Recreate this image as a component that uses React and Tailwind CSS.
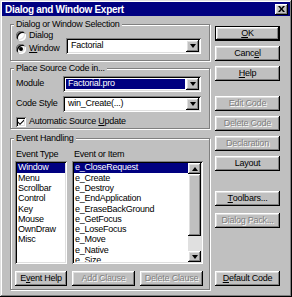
import React from "react";

// win95 style bevels
const raised =
  "shadow-[inset_-1px_-1px_0_#000,inset_1px_1px_0_#fff,inset_-2px_-2px_0_#808080,inset_2px_2px_0_#dfdfdf]";
const sunken =
  "shadow-[inset_1px_1px_0_#808080,inset_-1px_-1px_0_#fff,inset_2px_2px_0_#000,inset_-2px_-2px_0_#dfdfdf]";
const groupBox =
  "m-0 min-w-0 border border-[#808080] p-0 shadow-[inset_1px_1px_0_#fff,1px_1px_0_#fff]";

const U = ({ children }) => (
  <span className="underline underline-offset-[1px]">{children}</span>
);

const Button = ({ children, disabled, isDefault, className = "" }) => (
  <div
    className={`h-[15px] bg-[#c0c0c0] ${isDefault ? "border border-black" : ""} ${className}`}
  >
    <div
      className={`flex h-full w-full items-center justify-center whitespace-nowrap leading-none ${raised} ${
        disabled ? "text-[#808080] [text-shadow:1px_1px_0_#fff]" : "text-black"
      }`}
    >
      {children}
    </div>
  </div>
);

const Arrow = ({ up }) => (
  <div
    className={`h-0 w-0 border-x-[3px] border-x-transparent ${
      up ? "border-b-[4px] border-b-black" : "border-t-[4px] border-t-black"
    }`}
  />
);

const ArrowBtn = ({ up, className = "" }) => (
  <div className={`flex items-center justify-center bg-[#c0c0c0] ${raised} ${className}`}>
    <Arrow up={up} />
  </div>
);

const Combo = ({ value, selected, className = "" }) => (
  <div className={`flex h-[16px] items-stretch bg-white p-[2px] ${sunken} ${className}`}>
    <div className="flex flex-1 items-center py-[1px] pl-[1px]">
      <span
        className={`flex h-full w-full items-center px-[2px] ${
          selected ? "bg-[#000080] text-white" : "text-black"
        }`}
      >
        {value}
      </span>
    </div>
    <ArrowBtn className="ml-[1px] w-[13px]" />
  </div>
);

const Radio = ({ label, checked, className = "" }) => (
  <div className={`flex items-center ${className}`}>
    <div
      className={`flex h-[10px] w-[10px] items-center justify-center rounded-full bg-white ${sunken}`}
    >
      {checked && <div className="h-[4px] w-[4px] rounded-full bg-black" />}
    </div>
    <span className="ml-[3px]">{label}</span>
  </div>
);

const eventTypes = ["Window", "Menu", "Scrollbar", "Control", "Key", "Mouse", "OwnDraw", "Misc"];
const events = [
  "e_CloseRequest",
  "e_Create",
  "e_Destroy",
  "e_EndApplication",
  "e_EraseBackGround",
  "e_GetFocus",
  "e_LoseFocus",
  "e_Move",
  "e_Native",
  "e_Size",
];

export default function App() {
  return (
    <div className="w-[292px] h-[297px] overflow-hidden bg-[#c0c0c0] p-[2px] font-['Liberation_Sans',Arial,sans-serif] text-[9px] tracking-[-0.25px] text-black shadow-[inset_-1px_-1px_0_#000,inset_1px_1px_0_#dfdfdf,inset_-2px_-2px_0_#808080,inset_2px_2px_0_#fff]">
      {/* title bar */}
      <div className="flex h-[14px] items-center bg-[#000080] pl-[3px] pr-[2px]">
        <span className="text-[10px] font-bold tracking-[-0.3px] text-white">
          Dialog and Window Expert
        </span>
        <div className={`ml-auto flex h-[11px] w-[13px] items-center justify-center bg-[#c0c0c0] ${raised}`}>
          <svg width="7" height="6" viewBox="0 0 7 6">
            <path d="M0 0h2l1.5 2L5 0h2L4.5 3 7 6H5L3.5 4 2 6H0l2.5-3z" fill="#000" />
          </svg>
        </div>
      </div>

      <div className="flex pl-[8px]">
        {/* left column */}
        <div className="flex w-[200px] flex-col">
          <fieldset className={`mt-[3px] ${groupBox}`}>
            <legend className="ml-[3px] bg-[#c0c0c0] px-[2px] leading-[11px]">
              Dialog or Window Selection
            </legend>
            <div className="flex items-end pb-[5px] pl-[5px] pr-[8px]">
              <div className="flex flex-col">
                <Radio label="Dialog" className="h-[11px]" />
                <Radio
                  label={
                    <>
                      <U>W</U>indow
                    </>
                  }
                  checked
                  className="mt-[2px] h-[12px]"
                />
              </div>
              <Combo value="Factorial" className="mb-[1px] ml-auto w-[135px]" />
            </div>
          </fieldset>

          <fieldset className={`mt-[2px] ${groupBox}`}>
            <legend className="ml-[3px] bg-[#c0c0c0] px-[2px] leading-[11px]">
              Place Source Code in...
            </legend>
            <div className="flex flex-col pb-[1px] pl-[5px] pr-[8px] pt-[2px]">
              <div className="flex items-center">
                <span>Module</span>
                <Combo value="Factorial.pro" selected className="ml-auto w-[138px]" />
              </div>
              <div className="mt-[4px] flex items-center">
                <span>Code Style</span>
                <Combo value="win_Create(...)" className="ml-auto w-[138px]" />
              </div>
              <div className="mt-[5px] flex h-[10px] items-center">
                <div className={`flex h-[10px] w-[10px] items-center justify-center bg-white ${sunken}`}>
                  <svg width="6" height="6" viewBox="0 0 6 6">
                    <path d="M0 2.5l2 2L6 0.5V2L2 6 0 4z" fill="#000" />
                  </svg>
                </div>
                <span className="ml-[3px]">
                  Automatic Source <U>U</U>pdate
                </span>
              </div>
            </div>
          </fieldset>

          <fieldset className={`mt-[4px] ${groupBox}`}>
            <legend className="ml-[3px] bg-[#c0c0c0] px-[2px] leading-[11px]">
              Event Handling
            </legend>
            <div className="flex flex-col pb-[3px] pl-[4px] pt-[6px]">
              <div className="flex h-[10px] items-center">
                <span className="ml-[1px] w-[57px]">Event Type</span>
                <span className="ml-[1px]">Event or Item</span>
              </div>
              <div className="mt-[1px] flex">
                <div className={`h-[103px] w-[52px] overflow-hidden bg-white p-[2px] ${sunken}`}>
                  {eventTypes.map((t, i) => (
                    <div
                      key={t}
                      className={`flex h-[10.3px] items-center pl-[1px] ${
                        i === 0 ? "bg-[#000080] text-white" : ""
                      }`}
                    >
                      {t}
                    </div>
                  ))}
                </div>
                <div className={`ml-[5px] flex h-[103px] w-[131px] bg-white p-[2px] ${sunken}`}>
                  <div className="flex-1 overflow-hidden">
                    {events.map((e, i) => (
                      <div
                        key={e}
                        className={`flex h-[10.3px] items-center whitespace-nowrap pl-[1px] ${
                          i === 0 ? "bg-[#000080] text-white" : ""
                        }`}
                      >
                        {e}
                      </div>
                    ))}
                  </div>
                  <div className="flex w-[13px] flex-col">
                    <ArrowBtn up className="h-[11px]" />
                    <div className={`h-[62px] bg-[#c0c0c0] ${raised}`} />
                    <div className="flex-1 bg-[#e0e0e0]" />
                    <ArrowBtn className="h-[11px]" />
                  </div>
                </div>
              </div>
              <div className="mt-[7px] flex">
                <Button className="w-[52px]">
                  E<U>v</U>ent Help
                </Button>
                <Button disabled className="ml-[5px] w-[63px]">
                  Add Clause
                </Button>
                <Button disabled className="ml-[5px] w-[63px]">
                  Delete Clause
                </Button>
              </div>
            </div>
          </fieldset>
        </div>

        {/* right column */}
        <div className="ml-[5px] flex w-[65px] flex-col pt-[10px]">
          <Button isDefault>
            <U>O</U>K
          </Button>
          <Button className="mt-[5px]">
            Canc<U>e</U>l
          </Button>
          <Button className="mt-[5px]">
            <U>H</U>elp
          </Button>
          <Button disabled className="mt-[15px]">
            Edit Code
          </Button>
          <Button disabled className="mt-[5px]">
            Delete Code
          </Button>
          <Button disabled className="mt-[5px]">
            Declaration
          </Button>
          <Button className="mt-[5px]">Layout</Button>
          <Button className="mt-[20px]">
            <U>T</U>oolbars...
          </Button>
          <Button disabled className="mt-[7px]">
            Dialog Pack...
          </Button>
          <Button className="mt-[43px]">
            <U>D</U>efault Code
          </Button>
        </div>
      </div>
    </div>
  );
}
